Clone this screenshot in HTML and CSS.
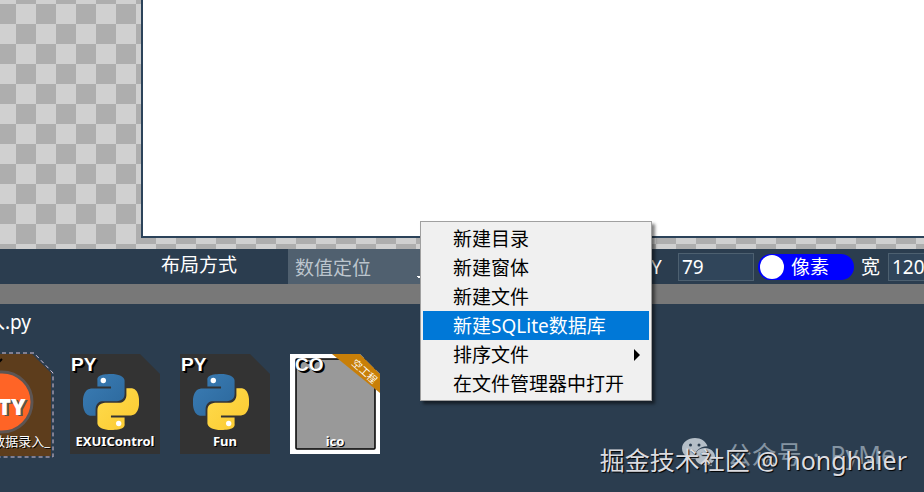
FILE: index.html
```
<!DOCTYPE html>
<html lang="zh-CN">
<head>
	<meta charset="utf-8">
	<title>PyMe</title>
	<link rel="stylesheet" href="styles.css">
</head>
<body>

<svg class="defs" aria-hidden="true">
	<defs>
		<linearGradient id="blue" x1="0" y1="0" x2="1" y2="1">
			<stop offset="0" stop-color="#3b7db5"/>
			<stop offset="1" stop-color="#2b679b"/>
		</linearGradient>
		<linearGradient id="yellow" x1="1" y1="1" x2="0" y2="0">
			<stop offset="0" stop-color="#ffdc4e"/>
			<stop offset="1" stop-color="#fbc92f"/>
		</linearGradient>
		<path id="snake" d="M14.25.18l.9.2.73.26.59.3.45.32.34.34.25.34.16.33.1.3.04.26.02.2-.01.13V8.5l-.05.63-.13.55-.21.46-.26.38-.3.31-.33.25-.35.19-.35.14-.33.1-.3.07-.26.04-.21.02H8.77l-.69.05-.59.14-.5.22-.41.27-.33.32-.27.35-.2.36-.15.37-.1.35-.07.32-.04.27-.02.21v3.06H3.17l-.21-.03-.28-.07-.32-.12-.35-.18-.36-.26-.36-.36-.35-.46-.32-.59-.28-.73-.21-.88-.14-1.05-.05-1.23.06-1.22.16-1.04.24-.87.32-.71.36-.57.4-.44.42-.33.42-.24.4-.16.36-.1.32-.05.24-.01h.16l.06.01h8.16v-.83H6.18l-.01-2.75-.02-.37.05-.34.11-.31.17-.28.25-.26.31-.23.38-.2.44-.18.51-.15.58-.12.64-.1.71-.06.77-.04.84-.02 1.27.05z"/>
		<g id="python">
			<use href="#snake" fill="url(#blue)"/>
			<use href="#snake" fill="url(#yellow)" transform="rotate(180 12 12)"/>
			<circle cx="8.7" cy="2.8" r="1.15" fill="#fff"/>
			<circle cx="15.3" cy="21.2" r="1.15" fill="#fff"/>
		</g>
	</defs>
</svg>

<main class="stage">
	<div class="canvas"></div>
</main>

<div class="props">
	<label class="layout-label" for="layout">布局方式</label>
	<select class="layout" id="layout">
		<option>数值定位</option>
	</select>
	<label class="name-y" for="y">Y</label>
	<input class="num" id="y" type="text" value="79">
	<label class="toggle"><input type="checkbox">像素</label>
	<label class="name-w" for="w">宽</label>
	<input class="num" id="w" type="text" value="120">
</div>

<div class="splitter"></div>

<section class="files">
	<h1 class="path">数据录入.py</h1>
	<div class="list">
		<a href="#" class="file selected">
			<svg class="shape" viewBox="0 0 94 106">
				<path d="M1 2H72L91 21V104H1z" fill="#5d3d1c"/>
				<path d="M0 1H74L93 21V105H0" fill="none" stroke="#d5c3d8" stroke-dasharray="4 3"/>
				<circle cx="42" cy="50" r="30" fill="#ff6426" stroke="#5d5553" stroke-width="3"/>
				<path d="M39 10l3-3" stroke="#000" stroke-width="2"/>
				<text x="27" y="64" class="tty shade">TTY</text>
				<text x="25" y="63" class="tty">TTY</text>
			</svg>
			<span class="name">数据录入_</span>
		</a>
		<a href="#" class="file">
			<span class="type">PY</span>
			<svg class="logo" viewBox="0 0 24 24"><use href="#python"/></svg>
			<span class="name">EXUIControl</span>
		</a>
		<a href="#" class="file">
			<span class="type">PY</span>
			<svg class="logo" viewBox="0 0 24 24"><use href="#python"/></svg>
			<span class="name">Fun</span>
		</a>
		<a href="#" class="file ico">
			<svg class="shape" viewBox="0 0 90 100">
				<path d="M0 0H90V100H0z" fill="#fff"/>
				<rect x="6" y="5" width="79" height="90" rx="1" fill="#999" stroke="#000" stroke-width="1.5"/>
				<path d="M42 0H70L90 20V39z" fill="#c87f08"/>
				<path d="M70 0H90V20z" fill="#2b3d4f"/>
				<text x="61" y="10" transform="rotate(42 61 10)" class="ribbon">空工程</text>
			</svg>
			<span class="type">CO</span>
			<span class="name">ico</span>
		</a>
	</div>
</section>

<menu class="menu">
	<li><button type="button">新建目录</button></li>
	<li><button type="button">新建窗体</button></li>
	<li><button type="button">新建文件</button></li>
	<li><button type="button" class="active">新建SQLite数据库</button></li>
	<li><button type="button" class="sub">排序文件</button></li>
	<li><button type="button">在文件管理器中打开</button></li>
</menu>

<div class="account">
	<svg viewBox="0 0 34 28">
		<path d="M13 0C6 0 0 4.500 0 10.500c0 3.400 1.900 6.300 4.900 8.200L3.700 22.500l4.600-2.300c1.500.4 3 .6 4.700.6C12 14 17 8.500 25.500 8.300 24 3.300 19 0 13 0z"/>
		<path d="M23 10c-6 0-10 4-10 8.700 0 4.800 4.300 8.500 10 8.500 1.200 0 2.400-.2 3.500-.5l3.500 1.800-.9-3c2.300-1.600 3.900-4 3.900-6.800C33 14 28.500 10 23 10z"/>
		<g fill="#2b3d4f"><circle cx="8.500" cy="7" r="1.500"/><circle cx="17" cy="7" r="1.500"/><circle cx="20" cy="16" r="1.300"/><circle cx="27" cy="16" r="1.300"/></g>
	</svg>
	<span>公众号</span>
	<span>·</span>
	<span>PyMe</span>
</div>
<div class="credit">掘金技术社区 @ honghaier</div>

</body>
</html>
```

FILE: styles.css
```
* {
	box-sizing: border-box;
}
body {
	position: relative;
	display: flex;
	flex-direction: column;
	margin: 0;
	min-height: 100vh;
	color: #fff;
	font: 19px/28px "Noto Sans", "Noto Sans CJK SC", sans-serif;
	background: #2b3d4f;
	overflow: hidden;
}
.defs {
	position: absolute;
	width: 0;
	height: 0;
}
.stage {
	display: flex;
	flex: 1;
	padding: 0 0 11px 141px;
	background: #d0d0d0 conic-gradient(#aeaeae 25%, #d0d0d0 0 50%, #aeaeae 0 75%, #d0d0d0 0) 36px 24px / 40px 40px;
}
.canvas {
	flex: 1;
	background: #fff;
	border: solid #2c435a;
	border-width: 0 0 2px 2px;
}

/* properties */
.props {
	display: flex;
	align-items: center;
	height: 35px;
	padding-left: 161px;
	white-space: nowrap;
	overflow: hidden;
}
.props > * {
	flex: none;
}
.layout-label {
	width: 127px;
	padding-bottom: 4px;
}
.layout {
	width: 140px;
	height: 35px;
	padding: 2px 7px 0;
	color: #bcc5cd;
	font: inherit;
	background: #50606f linear-gradient(to bottom left, #fff 50%, transparent 0) 128px 27px / 8px 5px no-repeat;
	border: none;
	border-radius: 0;
	appearance: none;
}
.name-y {
	width: 27px;
	margin-left: 223px;
}
.num {
	width: 76px;
	height: 28px;
	padding: 0 3px;
	color: #fff;
	font: inherit;
	background: #30455a;
	border: 1px solid #4d6070;
}
.toggle {
	display: flex;
	align-items: center;
	gap: 7px;
	width: 96px;
	height: 26px;
	margin: 0 7px 0 4px;
	padding-left: 2px;
	background: #00f;
	border-radius: 13px;
}
.toggle input {
	width: 24px;
	height: 24px;
	margin: 0;
	background: #fff;
	border-radius: 50%;
	appearance: none;
}
.name-w {
	width: 27px;
}
.splitter {
	height: 20px;
	background: #787878;
}

/* files, scrolled a little to the right */
.files {
	height: 188px;
	padding-top: 4px;
	overflow: hidden;
}
.path {
	display: flex;
	justify-content: flex-end;
	width: 31px;
	margin: 0 0 18px;
	font: inherit;
	white-space: nowrap;
}
.list {
	display: flex;
	gap: 20px;
	margin-left: -40px;
}
.file {
	position: relative;
	display: flex;
	flex: none;
	flex-direction: column;
	align-items: center;
	justify-content: flex-end;
	width: 90px;
	height: 100px;
	padding-bottom: 3px;
	color: #fff;
	text-decoration: none;
	background: #333;
	clip-path: polygon(0 0, 70px 0, 100% 20px, 100% 100%, 0 100%);
}
.file.selected,
.file.ico {
	background: none;
	clip-path: none;
}
.shape {
	position: absolute;
	top: 0;
	left: 0;
	width: 90px;
}
.selected .shape {
	top: -2px;
	width: 94px;
}
.logo {
	width: 56px;
	height: 56px;
	margin: 0 8px 1px 0;
}
.type {
	position: absolute;
	top: 0;
	left: 1px;
	font: bold 19px/22px "Liberation Sans", sans-serif;
	text-shadow: 1px 1px #000, 2px 2px #000;
}
.name {
	position: relative;
	font-size: 13px;
	font-weight: bold;
	line-height: 20px;
	text-shadow: 1px 1px #000;
}
.selected .name {
	align-self: flex-end;
	font-weight: normal;
}
.ico .type {
	left: 5px;
}
.tty {
	font: 800 22px "Open Sans", sans-serif;
	fill: #fff;
}
.tty.shade {
	fill: #555;
}
.ribbon {
	font-size: 10px;
	fill: #fff;
}

/* context menu */
.menu {
	position: absolute;
	top: 221px;
	left: 420px;
	width: 232px;
	margin: 0;
	padding: 2px;
	list-style: none;
	background: #f0f0f0;
	border: 1px solid #a0a0a0;
	box-shadow: 3px 3px 3px rgba(0, 0, 0, .5);
}
.menu button {
	display: flex;
	align-items: center;
	width: 100%;
	height: 29px;
	padding: 0 9px 0 30px;
	color: #000;
	font: inherit;
	background: none;
	border: none;
}
.menu .active {
	color: #fff;
	background: #0078d7;
}
.menu .sub::after {
	content: "";
	margin-left: auto;
	border: solid transparent;
	border-width: 6px 0 6px 6px;
	border-left-color: #000;
}

/* watermarks */
.account,
.credit {
	position: absolute;
	white-space: nowrap;
}
.account {
	right: 29px;
	bottom: 22px;
	display: flex;
	gap: 11px;
	font-size: 25px;
	line-height: 32px;
	color: #8494a2;
}
.account svg {
	width: 34px;
	height: 28px;
	fill: #b4bec7;
}
.credit {
	right: 17px;
	bottom: 14px;
	color: #dcdce0;
	font-size: 25px;
	line-height: 36px;
	text-shadow: 1px 1px 1px #000;
}
```
